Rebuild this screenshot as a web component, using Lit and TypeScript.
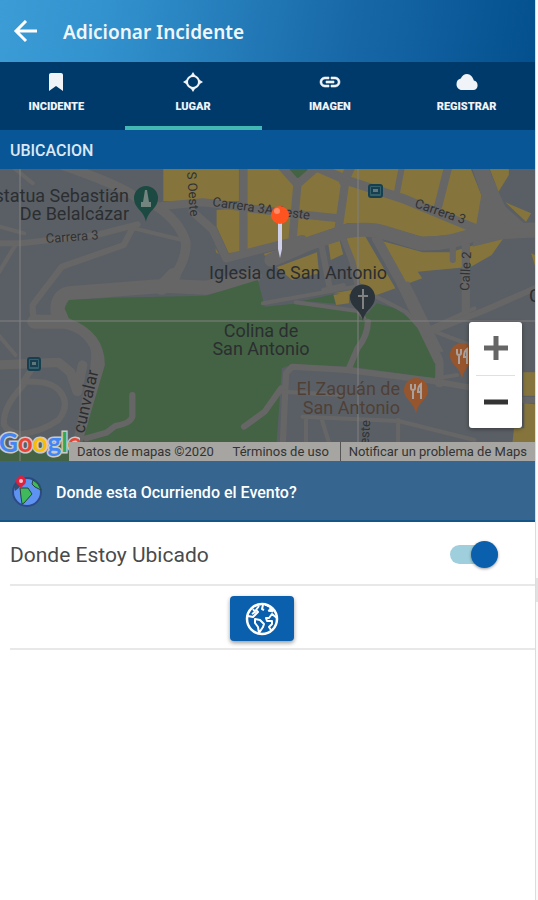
import { LitElement, html, css, svg } from "lit";
import { customElement, state } from "lit/decorators.js";

const tabs = [
  {
    id: "incidente",
    label: "INCIDENTE",
    icon: svg`<path d="M17 3H7c-1.1 0-2 .9-2 2v16l7-5 7 5V5c0-1.1-.9-2-2-2z"/>`,
  },
  {
    id: "lugar",
    label: "LUGAR",
    icon: svg`<circle cx="12" cy="12" r="6" fill="none" stroke="currentColor" stroke-width="2"/>
      <path d="M12 2l2.500 4h-5zM12 22l-2.500-4h5zM2 12l4-2.500v5zM22 12l-4 2.500v-5z"/>`,
  },
  {
    id: "imagen",
    label: "IMAGEN",
    icon: svg`<path stroke="currentColor" stroke-width=".6" d="M3.900 12c0-1.710 1.390-3.100 3.100-3.100h4V7H7c-2.760 0-5 2.240-5 5s2.240 5 5 5h4v-1.900H7c-1.710 0-3.100-1.390-3.100-3.100zM8 13h8v-2H8v2zm9-6h-4v1.900h4c1.710 0 3.100 1.390 3.100 3.100s-1.390 3.100-3.100 3.100h-4V17h4c2.760 0 5-2.240 5-5s-2.240-5-5-5z"/>`,
  },
  {
    id: "registrar",
    label: "REGISTRAR",
    icon: svg`<path d="M18.800 10.600C18.100 7.200 15.300 4 12 4c-2.800 0-5.100 2-6.200 4.500C3.200 8.900 1.500 11.200 1.500 14.200c0 3.100 2.300 5.800 5.500 5.800h11.200c2.600 0 4.400-2 4.400-4.600 0-2.600-1.600-4.600-3.800-4.800z"/>`,
  },
];

@customElement("incident-map")
export class IncidentMap extends LitElement {
  static styles = css`
    :host {
      display: block;
      position: relative;
      height: 292px;
      overflow: hidden;
      font-family: Roboto, sans-serif;
    }
    .canvas {
      display: block;
      width: 100%;
      height: 100%;
    }
    .road {
      fill: none;
      stroke: #676666;
      stroke-linecap: round;
      stroke-linejoin: round;
    }
    .w12 { stroke-width: 12; }
    .w18 { stroke-width: 18; }
    .w24 { stroke-width: 24; }
    .w28 { stroke-width: 28; }
    .w42 { stroke-width: 42; }
    .paved { fill: #676666; }
    .block { fill: #5a5f65; }
    .built { fill: #85753c; }
    .park { fill: #446344; }
    .place {
      font-size: 18px;
      fill: #2b2e31;
    }
    .food { fill: #503f35; }
    .street {
      font-size: 13px;
      fill: #303234;
    }
    .avenue {
      font-size: 17px;
      fill: #2b2e31;
    }
    .end { text-anchor: end; }
    .mid { text-anchor: middle; }
    .grid {
      stroke: #808080;
      stroke-width: 1;
    }
    .logo {
      position: absolute;
      left: 0;
      bottom: 0;
      width: 80px;
      height: 36px;
    }
    .brand {
      font-family: Lato, sans-serif;
      font-size: 26px;
      font-weight: 700;
      stroke: #c9c9c9;
      stroke-width: 3px;
      paint-order: stroke;
    }
    .blue { fill: #4285f4; }
    .red { fill: #ea4335; }
    .amber { fill: #fbbc05; }
    .green { fill: #34a853; }
    .legal {
      position: absolute;
      left: 69px;
      right: 0;
      bottom: 0;
      display: flex;
      justify-content: space-between;
      height: 19px;
      line-height: 19px;
      font-size: 13px;
      color: #333;
      background: #a6a5a2;
      white-space: nowrap;
    }
    .legal > * {
      padding: 0 8px;
      color: inherit;
      text-decoration: none;
    }
    .legal > :last-child { border-left: 1px solid #555; }
    .zoom {
      position: absolute;
      right: 13px;
      bottom: 33px;
      display: flex;
      flex-direction: column;
      width: 53px;
      height: 106px;
      box-sizing: border-box;
      padding: 0 7px;
      background: #fff;
      border-radius: 3px;
      box-shadow: 0 1px 4px rgba(0, 0, 0, 0.4);
    }
    .step {
      flex: 1;
      display: grid;
      place-items: center;
      padding: 0;
      border: 0;
      background: none;
      color: #666;
    }
    .step + .step {
      border-top: 1px solid #e0e0e0;
      color: #333;
    }
    .sign {
      width: 24px;
      height: 24px;
    }
  `;

  render() {
    return html`
      <svg class="canvas" viewBox="0 169 535 292" preserveAspectRatio="xMidYMid slice" role="img" aria-label="Mapa">
        <g transform="translate(0 165) scale(.3438 .3333)">
          <rect class="block" x="-900" y="-100" width="3400" height="1200" />
          <path class="road w12" d="M30 0 95 55M0 185 70 205M45 240-5 325M-5 510 45 570M390 190 530 225" />
          <path class="road w18" d="M-5 235H60L280 210 400 178M385 190 360 240 180 305 95 420Q92 470 120 475M100 600 68 650Q150 645 175 680 205 720 170 765 120 800 60 808 20 800 12 780 5 730 68 660" />
          <path class="road w28" d="M180 0Q350 60 400 100L450 120Q520 165 540 230 545 280 500 345M-5 600 170 592 205 622 225 680 240 600" />
          <path class="road w42" d="M740 332 600 368 480 362 200 385Q165 395 168 440L190 470Q260 485 285 550 290 620 265 680L238 810M100 470H190M505 330 470 368" />
          <path class="park" d="M188 430 200 405 330 398 600 392 750 345 770 425 870 415 1010 435 1070 445 1095 415 1150 430Q1240 490 1270 570L1268 640 1020 605 850 598 820 610 815 680 800 900H-5V855L240 830 265 740 305 600Q305 500 200 460zM880 408 970 388 975 416z" />

          <path class="built" d="M475 0H695V108H475zM630 135 700 130V262L665 264 630 185zM627 250 637 268 628 262z" />
          <path class="built" d="M700 0H1365L1400 90 1395 180 1340 208 1230 216 1100 178 1010 175 900 215 770 245 700 262zM1420 0H1480V30L1450 80zM1470 112 1545 145 1530 170z" />
          <path class="built" d="M768 266 860 240 850 255 770 272zM805 307 922 262 928 325 850 345zM955 237 988 227 998 268 962 285zM1008 220 1060 210 1150 370 1090 392 970 385 1050 370zM1100 225 1230 262 1310 262 1380 240 1465 218 1430 270 1370 305 1215 320 1228 340 1175 360 1140 330zM970 390 1015 382V415L978 420z" />
          <path class="built" d="M1545 265 1600 290V320L1560 315zM1522 622H1600V692H1522zM1525 715 1600 722V890H1485L1495 790H1525z" />
          <path class="park" d="M835 0H895V28L860 42 838 20z" />
          <path class="paved" d="M1370 0H1418L1450 80 1470 125 1530 180 1600 175V215L1465 222 1375 245 1385 180 1400 90z" />

          <path class="road w24" d="M708 0V260M475 122 590 112 640 118 800 140 985 160M560 140 620 195 658 280 770 250 880 222M815 0 865 58 912 15M865 58 850 235M1305 0 1275 122M1355 240V450M1005 45 985 190M1278 590V655" />
          <path class="road w28" d="M1022 0 1000 50M920 5 1020 50 1170 100 1380 190M1095 220 1165 350 1275 585" />
          <path class="road w42" d="M790 285 900 235 1010 198Q1080 188 1120 203L1220 235Q1310 240 1400 200L1600 192" />
          <path class="road w18" d="M1170 0 1155 80M1317 245V285M1000 225 1025 290 1040 360M935 240 960 375M1265 495 1400 440 1600 350M822 850 832 625 850 605 1010 615 1260 648 1370 668M710 785 770 740 818 670M1070 470Q1070 510 1040 550L1015 610M385 690V755Q380 775 335 783L310 803 250 820M1515 705H1600" />
          <path class="road w12" d="M765 415 1050 362M860 412 1040 438 1060 460M940 375 1000 360M1095 395 1180 440 1240 510M1265 500 1380 545M820 680 1000 690M880 755 1160 768 1380 825M1158 765V850M890 760V850M935 760 962 850M1230 500 1380 430M1270 640 1330 630" />
          <path class="paved" d="M1155 350 1190 350 1290 560 1265 560z" />
        </g>

        <path class="grid" d="M20 160V470M358 160V470M-300 321H900" />

        <text class="place end" x="129" y="202">Estatua Sebastián</text>
        <text class="place end" x="129" y="220">De Belalcázar</text>
        <text class="street" x="46" y="243" transform="rotate(-4 46 243)">Carrera 3</text>
        <text class="street" transform="translate(187 172) rotate(86)">S Oeste</text>
        <text class="street" transform="translate(212 206) rotate(8)">Carrera 3A Oeste</text>
        <text class="street" transform="translate(414 207) rotate(19)">Carrera 3</text>
        <text class="street" transform="translate(469 291) rotate(-87)">Calle 2</text>
        <text class="street" transform="translate(368 454) rotate(-86)">Oeste</text>
        <text class="avenue" transform="translate(84 434) rotate(-77)">cunvalar</text>
        <text class="place" x="209" y="279">Iglesia de San Antonio</text>
        <text class="place mid" x="261" y="337">Colina de</text>
        <text class="place mid" x="261" y="355">San Antonio</text>
        <text class="place end food" x="400" y="395">El Zaguán de</text>
        <text class="place end food" x="400" y="414">San Antonio</text>
        <text class="place" x="529" y="302">C</text>

        <path fill="#1c4a42" d="M146 222C144 210 134 209 134 198A12 12 0 0 1 158 198C158 209 148 210 146 222z" />
        <path fill="#74847f" d="M145 190h2l2 12h2v5h-10v-5h2z" />
        <path fill="#2b333b" d="M363 321C361 309 350 308 350 297A12 12 0 0 1 375 297C375 308 365 309 363 321z" />
        <path fill="none" stroke="#818181" stroke-width="2" d="M363 289v20M358 296h10" />
        <g id="fork">
          <path fill="#96552d" d="M416 414C414 401 404 400 404 390A12 12 0 0 1 428 390C428 400 418 401 416 414z" />
          <path fill="none" stroke="#aaa19c" stroke-width="2" d="M411 384v4q0 2 2 2v9M415 384v4q0 2-2 2M421 399v-15q-3 2-3 8h3" />
        </g>
        <use href="#fork" x="46" y="-35" />
        <g fill="none" stroke="#173f50" stroke-width="2">
          <rect x="369" y="185" width="13" height="12" rx="2" fill="#34606a" />
          <path d="M372 188h7v5h-7z" fill="#60777d" />
          <rect x="28" y="358" width="12" height="12" rx="2" fill="#34606a" />
          <path d="M31 361h6v5h-6z" fill="#60777d" />
        </g>
        <g>
          <path fill="#d0d0ea" d="M278 222h4v27l-2 9-2-9z" />
          <circle cx="280" cy="215" r="9" fill="#ff5420" />
          <circle cx="277" cy="211" r="3" fill="#ff8a64" />
        </g>
      </svg>

      <svg class="logo" viewBox="0 0 80 36" role="img" aria-label="Google">
        <text class="brand" x="-1" y="27"><tspan class="blue">G</tspan><tspan class="red">o</tspan><tspan class="amber">o</tspan><tspan class="blue">g</tspan><tspan class="green">l</tspan><tspan class="red">e</tspan></text>
      </svg>
      <div class="legal">
        <span>Datos de mapas ©2020</span>
        <a href="#terminos">Términos de uso</a>
        <a href="#notificar">Notificar un problema de Maps</a>
      </div>
      <div class="zoom">
        <button class="step" aria-label="Acercar">
          <svg class="sign" viewBox="0 0 24 24" fill="none" stroke="currentColor" stroke-width="5"><path d="M0 12h24M12 0v24" /></svg>
        </button>
        <button class="step" aria-label="Alejar">
          <svg class="sign" viewBox="0 0 24 24" fill="none" stroke="currentColor" stroke-width="5"><path d="M0 12h24" /></svg>
        </button>
      </div>
    `;
  }
}

@customElement("app-root")
export class AppRoot extends LitElement {
  @state() private active = "lugar";

  static styles = css`
    :host {
      display: grid;
      grid-template-columns: 1fr 2px;
      min-height: 100vh;
      background: #fff;
      font-family: Roboto, sans-serif;
    }
    .screen {
      min-width: 0;
      border-right: 1px solid #dcdcdc;
    }
    .gutter {
      background: linear-gradient(#e2e2e2, #e2e2e2) 0 578px / 2px 24px no-repeat,
        #fafafa;
    }
    .header {
      display: flex;
      align-items: center;
      gap: 24px;
      height: 62px;
      padding: 2px 12px 0;
      box-sizing: border-box;
      color: #fff;
      background: linear-gradient(100deg, #3b9cd6 0%, #3292cd 20%, #1767a6 66%, #04508f 100%);
    }
    .back {
      display: grid;
      padding: 0;
      border: 0;
      background: none;
      color: inherit;
    }
    .back-icon {
      width: 27px;
      height: 24px;
    }
    .title {
      margin: 0;
      font: 600 19px/24px "Noto Sans", sans-serif;
      color: #f0f6fc;
    }
    .tabs {
      display: flex;
      height: 68px;
      overflow: hidden;
      background: #003a6a;
    }
    .tab {
      flex: 1;
      display: flex;
      flex-direction: column;
      align-items: center;
      gap: 6px;
      box-sizing: border-box;
      padding: 8px 0 0;
      border: 0;
      border-bottom: 4px solid transparent;
      background: none;
      color: #f0f4f9;
      font: 900 11px/14px Roboto, sans-serif;
    }
    .tab:first-child { margin-left: -12px; }
    .tab.active { border-bottom-color: #41b8b4; }
    .tab-icon {
      width: 24px;
      height: 24px;
      fill: currentColor;
    }
    .section {
      margin: 0;
      padding: 2px 10px 0;
      font-size: 16px;
      font-weight: 500;
      line-height: 37px;
      color: #dbe8f5;
      background: #095697;
    }
    .question {
      display: flex;
      align-items: center;
      gap: 12px;
      height: 61px;
      padding: 4px 10px 0;
      box-sizing: border-box;
      border-bottom: 2px solid #145488;
      background: #36658f;
      color: #fff;
    }
    .question-text {
      margin: 0;
      font-size: 16px;
      font-weight: 500;
      line-height: 24px;
    }
    .globe {
      width: 34px;
      height: 34px;
    }
    .row {
      display: flex;
      align-items: center;
      justify-content: space-between;
      box-sizing: border-box;
      height: 64px;
      margin-left: 10px;
      padding-top: 3px;
      border-bottom: 2px solid #e8e8e8;
    }
    .row.centered { justify-content: center; }
    .row-label {
      font-size: 21px;
      line-height: 28px;
      color: #4a4a4a;
    }
    .switch {
      appearance: none;
      display: flex;
      align-items: center;
      justify-content: flex-start;
      width: 48px;
      height: 19px;
      margin: 0 37px 0 0;
      background: #9fcfdc;
      border-radius: 10px;
    }
    .switch::before {
      content: "";
      flex: none;
      width: 27px;
      height: 27px;
      border-radius: 50%;
      background: #888;
      box-shadow: 0 1px 3px rgba(0, 0, 0, 0.4);
    }
    .switch:checked { justify-content: flex-end; }
    .switch:checked::before { background: #0a60ac; }
    .locate {
      display: grid;
      place-items: center;
      width: 64px;
      height: 45px;
      margin-right: 22px;
      padding: 0;
      border: 0;
      border-radius: 4px;
      background: #0a60ac;
      color: #fff;
      box-shadow: 0 2px 4px rgba(0, 0, 0, 0.4);
    }
    .locate-icon {
      width: 34px;
      height: 34px;
    }
  `;

  render() {
    return html`
      <main class="screen">
        <header class="header">
          <button class="back" aria-label="Volver">
            <svg class="back-icon" viewBox="0 0 27 24" fill="none" stroke="currentColor" stroke-width="3">
              <path d="M25 11H4M14 1 4 11l10 10" />
            </svg>
          </button>
          <h1 class="title">Adicionar Incidente</h1>
        </header>
        <nav class="tabs">
          ${tabs.map(
            (tab) => html`<button
              class="tab ${tab.id === this.active ? "active" : ""}"
              @click=${() => (this.active = tab.id)}
            >
              <svg class="tab-icon" viewBox="0 0 24 24" aria-hidden="true">${tab.icon}</svg>
              ${tab.label}
            </button>`
          )}
        </nav>
        <h2 class="section">UBICACION</h2>
        <incident-map></incident-map>
        <div class="question">
          <svg class="globe" viewBox="0 0 34 34" aria-hidden="true">
            <circle cx="17" cy="16" r="14" fill="#5f93f2" stroke="#2b4a86" stroke-width="2" />
            <path d="M10 12 18 12 22 18 14 27 12 28 11 21z" fill="#3fb95b" stroke="#26433f" />
            <path d="M23 4q6 3 8 10l-6-3-3-3z" fill="#3fb95b" stroke="#26433f" />
            <path d="M4 11q2-5 6-6v6l-5 4z" fill="#35506f" />
            <path d="M11 13C10 9 6 9 6 5a5 5 0 0 1 10 0c0 4-4 4-5 8z" fill="#e0203f" />
            <circle cx="11" cy="5" r="2" fill="#ffc7cf" />
          </svg>
          <h3 class="question-text">Donde esta Ocurriendo el Evento?</h3>
        </div>
        <div class="row">
          <label class="row-label" for="ubicado">Donde Estoy Ubicado</label>
          <input class="switch" id="ubicado" type="checkbox" checked />
        </div>
        <div class="row centered">
          <button class="locate" aria-label="Ubicar en el mapa">
            <svg class="locate-icon" viewBox="0 0 34 34" fill="none" stroke="currentColor" stroke-width="2" stroke-linejoin="round" aria-hidden="true">
              <circle cx="17" cy="17" r="15" stroke-width="2.500" />
              <path d="M3 14 8 15 13 10 11 8 14 4M8 7 10 10 7 12" />
              <path d="M10 17 15 18 19 22 18 25 14 31 13 25 10 21z" />
              <path d="M18 3 17 7 19 8M32 16 27 12 24 16 21 16 22 19 27 19 27 22 24 25 26 28" />
              <path stroke-width="1" d="M20 3 26 5 23 9 28 10 28 7z" fill="currentColor" />
            </svg>
          </button>
        </div>
      </main>
      <div class="gutter"></div>
    `;
  }
}
